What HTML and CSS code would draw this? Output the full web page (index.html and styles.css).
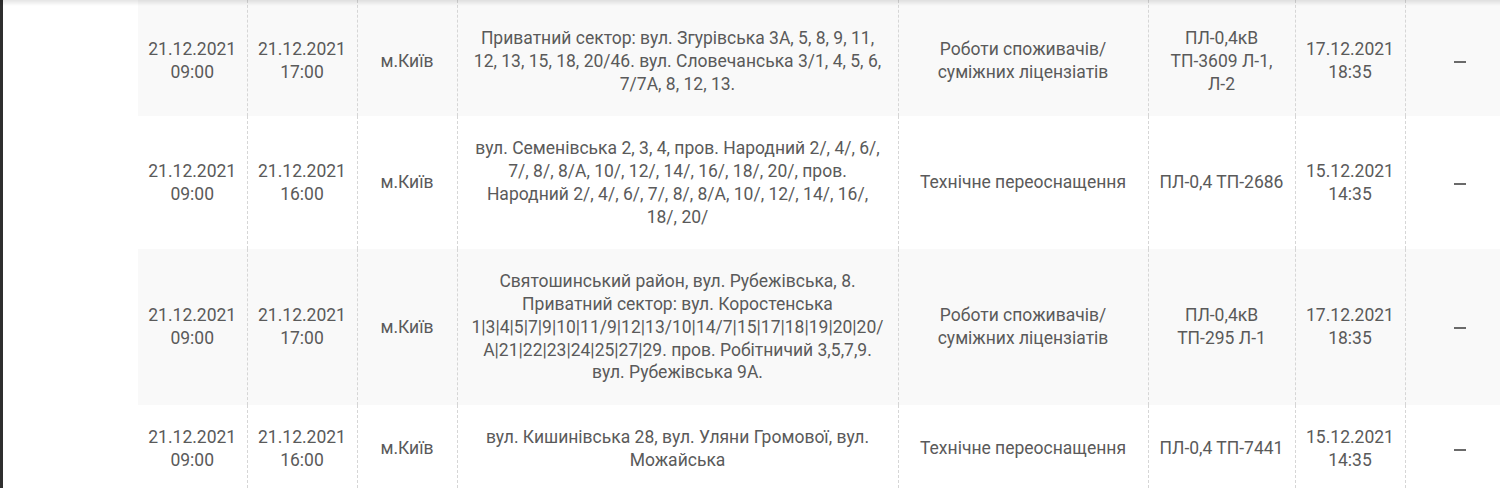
FILE: index.html
```html
<!DOCTYPE html>
<html lang="uk">
<head>
<meta charset="utf-8">
<title>Графік відключень</title>
<link rel="stylesheet" href="styles.css">
</head>
<body>
<div class="top-shadow"></div>
<main class="page">
  <table class="schedule">
    <colgroup>
      <col class="c-start">
      <col class="c-end">
      <col class="c-city">
      <col class="c-addr">
      <col class="c-reason">
      <col class="c-line">
      <col class="c-created">
      <col class="c-note">
    </colgroup>
    <tbody>
      <tr class="row-gray row-first">
        <td>21.12.2021 09:00</td>
        <td>21.12.2021 17:00</td>
        <td>м.Київ</td>
        <td class="addr">Приватний сектор: вул. Згурівська 3А, 5, 8, 9, 11, 12, 13, 15, 18, 20/46. вул. Словечанська 3/1, 4, 5, 6, 7/7А, 8, 12, 13.</td>
        <td>Роботи споживачів/суміжних ліцензіатів</td>
        <td>ПЛ-0,4кВ ТП-3609 Л-1, Л-2</td>
        <td>17.12.2021 18:35</td>
        <td><span class="dash"></span></td>
      </tr>
      <tr>
        <td>21.12.2021 09:00</td>
        <td>21.12.2021 16:00</td>
        <td>м.Київ</td>
        <td class="addr">вул. Семенівська 2, 3, 4, пров. Народний 2/, 4/, 6/, 7/, 8/, 8/А, 10/, 12/, 14/, 16/, 18/, 20/, пров. Народний 2/, 4/, 6/, 7/, 8/, 8/А, 10/, 12/, 14/, 16/, 18/, 20/</td>
        <td>Технічне переоснащення</td>
        <td>ПЛ-0,4 ТП-2686</td>
        <td>15.12.2021 14:35</td>
        <td><span class="dash"></span></td>
      </tr>
      <tr class="row-gray">
        <td>21.12.2021 09:00</td>
        <td>21.12.2021 17:00</td>
        <td>м.Київ</td>
        <td class="addr">Святошинський район, вул. Рубежівська, 8. Приватний сектор: вул. Коростенська 1|3|4|5|7|9|10|11/9|12|13/10|14/7|15|17|18|19|20|20/А|21|22|23|24|25|27|29. пров. Робітничий 3,5,7,9. вул. Рубежівська 9А.</td>
        <td>Роботи споживачів/суміжних ліцензіатів</td>
        <td>ПЛ-0,4кВ ТП-295 Л-1</td>
        <td>17.12.2021 18:35</td>
        <td><span class="dash"></span></td>
      </tr>
      <tr>
        <td>21.12.2021 09:00</td>
        <td>21.12.2021 16:00</td>
        <td>м.Київ</td>
        <td class="addr">вул. Кишинівська 28, вул. Уляни Громової, вул. Можайська</td>
        <td>Технічне переоснащення</td>
        <td>ПЛ-0,4 ТП-7441</td>
        <td>15.12.2021 14:35</td>
        <td><span class="dash"></span></td>
      </tr>
    </tbody>
  </table>
</main>
</body>
</html>
```
FILE: styles.css
```css
html {
  overflow: hidden;
  background: #ffffff;
}

body {
  margin: 0;
  border-left: 3px solid #2f2f2f;
  min-height: 488px;
  font-family: Roboto, "Noto Sans", "Liberation Sans", sans-serif;
  color: #5a5a5a;
  background: #ffffff;
}

.top-shadow {
  position: fixed;
  top: 0;
  left: 0;
  right: 0;
  height: 6px;
  background: linear-gradient(to bottom, rgba(0, 0, 0, 0.1), rgba(0, 0, 0, 0));
  z-index: 2;
}

.page {
  padding-left: 135px;
}

.schedule {
  border-collapse: collapse;
  table-layout: fixed;
  width: 1377px;
  font-size: 17.5px;
  line-height: 22.75px;
}

.c-start { width: 109px; }
.c-end { width: 110px; }
.c-city { width: 100px; }
.c-addr { width: 441px; }
.c-reason { width: 250px; }
.c-line { width: 147px; }
.c-created { width: 110px; }
.c-note { width: 110px; }

.schedule td {
  padding: 21px 10px;
  text-align: center;
  vertical-align: middle;
  border-left: 1px dashed #d6d6d6;
}

.schedule td:first-child {
  border-left: none;
}

.schedule td.addr {
  padding-left: 13px;
  padding-right: 13px;
}

.row-gray td {
  background: #f9f9f9;
}

.row-first td {
  padding-top: 27px;
}

.dash {
  display: inline-block;
  width: 12px;
  height: 2px;
  background: #6a6a6a;
  vertical-align: middle;
}
```
